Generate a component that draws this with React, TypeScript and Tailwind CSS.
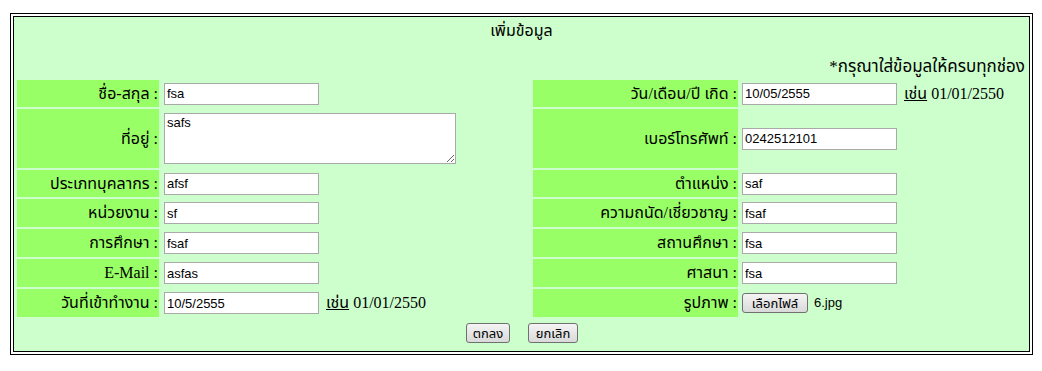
import React from 'react';

const PAGE_FONT = "font-['Liberation_Serif','Tahoma','Noto_Sans_Thai','Loma','Garuda','DejaVu_Sans',serif]";
const INPUT_FONT = "font-['Liberation_Sans','Tahoma','Noto_Sans_Thai','Loma','DejaVu_Sans',sans-serif]";

type Row = { label: string; value?: string; kind?: 'text' | 'area' | 'file'; hint?: boolean };

const LEFT: Row[] = [
  { label: 'ชื่อ-สกุล :', value: 'fsa' },
  { label: 'ที่อยู่ :', value: 'safs', kind: 'area' },
  { label: 'ประเภทบุคลากร :', value: 'afsf' },
  { label: 'หน่วยงาน :', value: 'sf' },
  { label: 'การศึกษา :', value: 'fsaf' },
  { label: 'E-Mail :', value: 'asfas' },
  { label: 'วันที่เข้าทำงาน :', value: '10/5/2555', hint: true },
];

const RIGHT: Row[] = [
  { label: 'วัน/เดือน/ปี เกิด :', value: '10/05/2555', hint: true },
  { label: 'เบอร์โทรศัพท์ :', value: '0242512101' },
  { label: 'ตำแหน่ง :', value: 'saf' },
  { label: 'ความถนัด/เชี่ยวชาญ :', value: 'fsaf' },
  { label: 'สถานศึกษา :', value: 'fsa' },
  { label: 'ศาสนา :', value: 'fsa' },
  { label: 'รูปภาพ :', kind: 'file' },
];

function Hint() {
  return (
    <span className="ml-[7px] text-[16px] text-black">
      <u>เช่น</u> 01/01/2550
    </span>
  );
}

function Field({ row }: { row: Row }) {
  if (row.kind === 'area') {
    return (
      <textarea
        defaultValue={row.value}
        className={`${INPUT_FONT} w-[292px] h-[51px] border border-[#a9a9a9] bg-white px-[2px] py-[1px] text-[13px] text-black leading-[16px] outline-none`}
      />
    );
  }
  if (row.kind === 'file') {
    return (
      <div className={`${INPUT_FONT} flex items-center text-[13px] text-black`}>
        <button className="h-[20px] w-[66px] rounded-[3px] border border-[#707070] bg-gradient-to-b from-[#f4f4f4] to-[#d9d9d9] text-[13px] leading-none">
          เลือกไฟล์
        </button>
        <span className="ml-[6px]">6.jpg</span>
      </div>
    );
  }
  return (
    <div className="flex items-center">
      <input
        defaultValue={row.value}
        className={`${INPUT_FONT} w-[155px] h-[22px] border border-[#a9a9a9] bg-white px-[2px] text-[13px] text-black outline-none`}
      />
      {row.hint && <Hint />}
    </div>
  );
}

function Label({ text }: { text: string }) {
  return (
    <div className="flex items-center justify-end bg-[#99ff66] pr-[1px] text-[16px] text-black">
      {text}
    </div>
  );
}

export default function App() {
  return (
    <div className={`${PAGE_FONT} bg-white w-[1042px] h-[371px] pl-[10px] pt-[13px]`}>
      <div className="w-[1023px] h-[342px] border border-black p-[2px]">
        <div className="h-full border border-black bg-[#ccffcc]">
          <div className="h-[27px] flex items-center justify-center text-[16px]">เพิ่มข้อมูล</div>
          <div className="h-[36px] flex items-end justify-end pr-[4px] pb-[2px] leading-[22px] text-[17px]">
            *กรุณาใส่ข้อมูลให้ครบทุกช่อง
          </div>
          <div className="grid grid-cols-[142px_368px_205px_284px] grid-rows-[27px_59px_27px_28px_28px_28px_28px] gap-x-[3px] gap-y-[2px] px-[3px]">
            {LEFT.map((l, i) => (
              <React.Fragment key={i}>
                <Label text={l.label} />
                <div className="flex items-center pl-[2px]">
                  <Field row={l} />
                </div>
                <Label text={RIGHT[i].label} />
                <div className="flex items-center pl-[1px]">
                  <Field row={RIGHT[i]} />
                </div>
              </React.Fragment>
            ))}
          </div>
          <div className={`${INPUT_FONT} mt-[6px] flex justify-center gap-[18px] pl-[1px] text-[13px]`}>
            <button className="h-[20px] w-[44px] rounded-[3px] border border-[#707070] bg-gradient-to-b from-[#f4f4f4] to-[#d9d9d9] leading-none">
              ตกลง
            </button>
            <button className="h-[20px] w-[50px] rounded-[3px] border border-[#707070] bg-gradient-to-b from-[#f4f4f4] to-[#d9d9d9] leading-none">
              ยกเลิก
            </button>
          </div>
        </div>
      </div>
    </div>
  );
}
